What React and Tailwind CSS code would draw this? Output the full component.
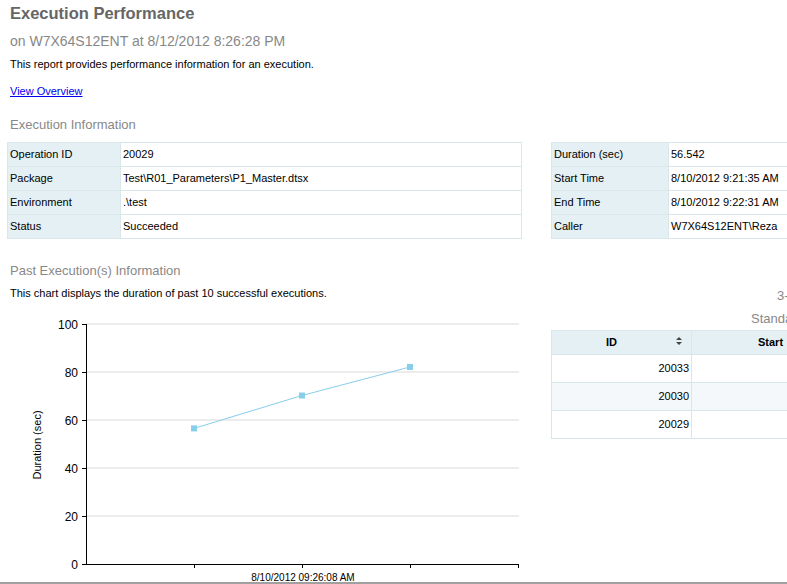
import React from 'react';

const execInfo = [
  ['Operation ID', '20029'],
  ['Package', 'Test\\R01_Parameters\\P1_Master.dtsx'],
  ['Environment', '.\\test'],
  ['Status', 'Succeeded'],
];

const execTimes = [
  ['Duration (sec)', '56.542'],
  ['Start Time', '8/10/2012 9:21:35 AM'],
  ['End Time', '8/10/2012 9:22:31 AM'],
  ['Caller', 'W7X64S12ENT\\Reza'],
];

const pastRuns = ['20033', '20030', '20029'];

function InfoTable({ rows, className, labelW }) {
  return (
    <table className={`border-collapse text-[11px] text-black ${className}`}>
      <tbody>
        {rows.map(([k, v]) => (
          <tr key={k} className="h-[24px]">
            <td className={`border border-[#d9e6ea] bg-[#e4f0f4] pl-[2px] ${labelW}`}>{k}</td>
            <td className="border border-[#d9e6ea] bg-white pl-[2px] whitespace-nowrap">{v}</td>
          </tr>
        ))}
      </tbody>
    </table>
  );
}

function Chart() {
  const y = v => 564 - v * 2.4;
  const pts = [[194, 56.5], [302, 70.2], [410, 82.1]];
  return (
    <svg width="530" height="270" viewBox="0 314 530 270" className="block">
      {[20, 40, 60, 80, 100].map(v => (
        <line key={v} x1="86" x2="519" y1={y(v)} y2={y(v)} stroke="#d9d9d9" strokeWidth="1" />
      ))}
      {[0, 20, 40, 60, 80, 100].map(v => (
        <g key={v}>
          <line x1="82" x2="86" y1={y(v) + 0.5} y2={y(v) + 0.5} stroke="#000" />
          <text x="78" y={y(v) + 4.5} textAnchor="end" fontSize="12" fill="#000"
            fontFamily="'Liberation Sans', Arial, sans-serif">{v}</text>
        </g>
      ))}
      <line x1="86.5" x2="86.5" y1="324" y2="565" stroke="#000" />
      <line x1="86" x2="519" y1="564.5" y2="564.5" stroke="#000" />
      {[194, 302, 410, 518].map(x => (
        <line key={x} x1={x + 0.5} x2={x + 0.5} y1="564" y2="568" stroke="#000" />
      ))}
      <text x="303" y="581" textAnchor="middle" fontSize="10" fill="#000"
        fontFamily="'Liberation Sans', Arial, sans-serif">8/10/2012 09:26:08 AM</text>
      <text x="0" y="0" transform="translate(41 445) rotate(-90)" textAnchor="middle" fontSize="11" fill="#000"
        fontFamily="'Liberation Sans', Arial, sans-serif">Duration (sec)</text>
      <polyline points={pts.map(([x, v]) => `${x},${y(v)}`).join(' ')} fill="none" stroke="#87ceeb" strokeWidth="1" />
      {pts.map(([x, v]) => (
        <rect key={x} x={x - 3} y={y(v) - 3} width="6" height="6" fill="#87ceeb" />
      ))}
    </svg>
  );
}

export default function App() {
  return (
    <div className="w-[787px] h-[584px] overflow-hidden bg-white relative font-['Liberation_Sans',Arial,sans-serif]">
      <div className="w-[900px]">
        <div className="pl-[10px] pt-[3px] text-[16.5px] font-bold text-[#666] leading-[20px]">Execution Performance</div>
        <div className="pl-[10px] pt-[9px] text-[14px] text-[#888] leading-[18px]">on W7X64S12ENT at 8/12/2012 8:26:28 PM</div>
        <div className="pl-[10px] pt-[7px] text-[11px] text-black leading-[14px]">This report provides performance information for an execution.</div>
        <div className="pl-[10px] pt-[13px] text-[11px] leading-[14px]">
          <a href="#" className="text-[#0000ee] underline">View Overview</a>
        </div>
        <div className="pl-[10px] pt-[19px] text-[13px] text-[#888] leading-[16px]">Execution Information</div>

        <div className="flex pt-[9px] pl-[7px]">
          <InfoTable rows={execInfo} className="w-[515px]" labelW="w-[113px]" />
          <InfoTable rows={execTimes} className="ml-[29px] w-[260px]" labelW="w-[117px]" />
        </div>

        <div className="flex">
          <div className="w-[544px] shrink-0">
            <div className="pl-[10px] pt-[24px] text-[13px] text-[#888] leading-[16px]">Past Execution(s) Information</div>
            <div className="pl-[10px] pt-[7px] text-[11px] text-black leading-[14px]">This chart displays the duration of past 10 successful executions.</div>
            <div className="pt-[14px]">
              <Chart />
            </div>
          </div>
          <div className="pl-[7px] pt-[49px]">
            <div className="pl-[226px] text-[13px] text-[#888] leading-[16px]">3-</div>
            <div className="pl-[200px] pt-[7px] text-[13px] text-[#888] leading-[16px] whitespace-nowrap">Standard</div>
            <table className="mt-[3px] border-collapse text-[11px] text-black w-[300px]">
              <thead>
                <tr className="h-[24px] bg-[#e4f0f4]">
                  <th className="border border-[#d9e6ea] w-[140px] font-bold relative">
                    <span className="pr-[20px]">ID</span>
                    <span className="absolute right-[9px] top-[5px] flex flex-col items-center leading-none">
                      <svg width="6" height="10" viewBox="0 0 6 10">
                        <path d="M0 4 L3 1 L6 4 Z" fill="#444" />
                        <path d="M0 6 L3 9 L6 6 Z" fill="#444" />
                      </svg>
                    </span>
                  </th>
                  <th className="border border-[#d9e6ea] font-bold text-left pl-[66px]">Start</th>
                </tr>
              </thead>
              <tbody>
                {pastRuns.map((id, i) => (
                  <tr key={id} className={`h-[28px] ${i === 1 ? 'bg-[#f4f8fa]' : 'bg-white'}`}>
                    <td className="border border-[#d9e6ea] text-right pr-[2px]">{id}</td>
                    <td className="border border-[#d9e6ea]"></td>
                  </tr>
                ))}
              </tbody>
            </table>
          </div>
        </div>
      </div>
      <div className="absolute left-0 right-0 bottom-0 h-[2px] bg-[#a0a0a0]" />
    </div>
  );
}
